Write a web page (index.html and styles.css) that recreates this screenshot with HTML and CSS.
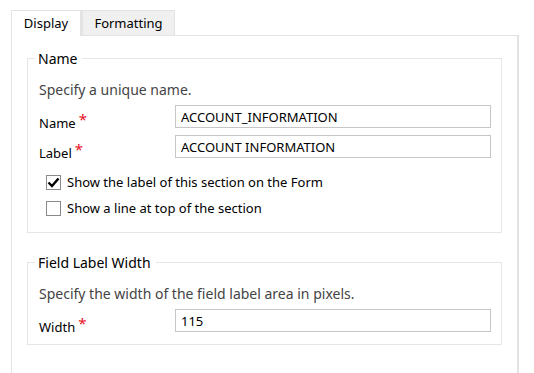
FILE: index.html
```html
<!DOCTYPE html>
<html lang="en">
<head>
  <meta charset="UTF-8">
  <title>Section Properties</title>
  <link rel="stylesheet" href="styles.css">
</head>
<body>

<div class="tabs">
  <div class="tab active">Display</div>
  <div class="tab">Formatting</div>
</div>

<div class="panel">
  <fieldset class="group">
    <legend>Name</legend>
    <p class="hint">Specify a unique name.</p>
    <div class="row">
      <label for="secName">Name<span class="req">*</span></label>
      <input type="text" id="secName" value="ACCOUNT_INFORMATION">
    </div>
    <div class="row">
      <label for="secLabel">Label<span class="req">*</span></label>
      <input type="text" id="secLabel" value="ACCOUNT INFORMATION">
    </div>
    <div class="checks">
      <div class="check">
        <span class="box">
          <svg width="13" height="13" viewBox="0 0 13 13"><path d="M1.5 6.5 L5 10 L11.5 2.5" fill="none" stroke="#000" stroke-width="2.4"/></svg>
        </span>
        Show the label of this section on the Form
      </div>
      <div class="check">
        <span class="box"></span>
        Show a line at top of the section
      </div>
    </div>
  </fieldset>

  <fieldset class="group">
    <legend>Field Label Width</legend>
    <p class="hint">Specify the width of the field label area in pixels.</p>
    <div class="row">
      <label for="labelWidth">Width<span class="req">*</span></label>
      <input type="text" id="labelWidth" value="115">
    </div>
  </fieldset>
</div>

</body>
</html>
```

FILE: styles.css
```css
html, body {
  margin: 0;
  background: #fff;
  font-family: 'Noto Sans', 'Open Sans', sans-serif;
  font-size: 13px;
  color: #000;
}

.tabs {
  display: flex;
  padding: 10px 0 0 11px;
}

.tab {
  box-sizing: border-box;
  width: 93px;
  height: 25px;
  line-height: 25px;
  text-align: center;
  border: 1px solid #e3e3e3;
  border-bottom: none;
  background: #f0f0f0;
  color: #000;
}

.tab.active {
  width: 71px;
  background: #fff;
  margin-bottom: -1px;
  height: 26px;
  border-right: 2px solid #e3e3e3;
}

.panel {
  margin-left: 11px;
  width: 508px;
  height: 338px;
  border: 1px solid #e3e3e3;
  border-right-width: 2px;
  border-bottom: none;
  padding: 13px 16px 0 15px;
  box-sizing: border-box;
}

.group {
  margin: 0 0 20px 0;
  padding: 0 10px 11px 11px;
  border: 1px solid #e6e6e6;
}

.group legend {
  font-size: 14px;
  line-height: 19px;
  padding: 0 5px 0 3px;
  margin-left: -4px;
}

.hint {
  margin: 12px 0 6px 0;
  line-height: 19px;
  color: #444;
  font-size: 14px;
}

.row {
  display: flex;
  height: 23px;
  margin-bottom: 7px;
}

.row:last-child {
  margin-bottom: 1px;
}

.row label {
  width: 136px;
  padding-top: 6px;
  line-height: 17px;
}

.req {
  color: #e81123;
  margin-left: 3px;
  font-size: 15px;
  vertical-align: 3px;
}

.row input {
  width: 316px;
  height: 23px;
  box-sizing: border-box;
  border: 1px solid #c6c6c6;
  padding: 0 5px;
  font-family: inherit;
  font-size: 13px;
  color: #000;
  outline: none;
}

.checks {
  margin-top: 11px;
}

.check {
  display: flex;
  align-items: center;
  padding-left: 7px;
  height: 26px;
}

.box {
  width: 13px;
  height: 13px;
  border: 1px solid #8a8a8a;
  margin-right: 6px;
  display: flex;
}
```
